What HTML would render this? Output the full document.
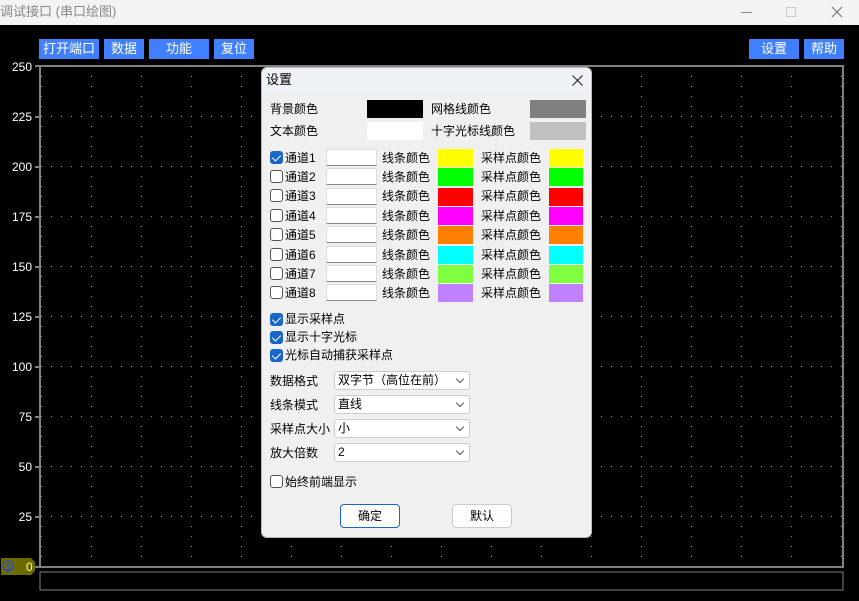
<!DOCTYPE html>
<html><head><meta charset="utf-8"><style>
*{margin:0;padding:0;box-sizing:border-box}
body{width:859px;height:601px;background:#000;position:relative;overflow:hidden;font-family:"Liberation Sans","Noto Sans CJK SC",sans-serif;font-size:12px}
.a{position:absolute}
.tb{left:0;top:0;width:859px;height:25px;background:#f3f3f3;color:#888;font-size:13px;line-height:24px}
.btn{background:#4080ff;color:#fff;font-size:13px;text-align:center;line-height:19px;height:20px;top:39px}
.yl{color:#fff;font-size:12px;width:32px;text-align:right;left:0;line-height:12px}
.dlg{left:261px;top:67px;width:331px;height:471px;background:#f0f0f0;border:1px solid #bbb;border-radius:6px;overflow:hidden;color:#000}
.dh{left:0;top:0;width:330px;height:25px;background:#eef2f7}
.t{font-size:12px;line-height:14px;white-space:nowrap}
.cb{width:13px;height:13px;border:1px solid #555;border-radius:3px;background:#fff}
.cbc{background:#1a66c8;border-color:#1a66c8}
.cbc:after{content:"";position:absolute;left:3px;top:1px;width:4px;height:7px;border:solid #fff;border-width:0 1.5px 1.5px 0;transform:rotate(45deg)}
.tx{width:51px;height:17px;background:#fff;border-bottom:1px solid #888;border-top:1px solid #ddd;border-left:1px solid #ddd;border-right:1px solid #ddd}
.sel{left:72px;width:136px;height:19px;background:#fff;border:1px solid #ccc;border-radius:3px;font-size:12px;line-height:17px;padding-left:3px}
.sel:after{content:"";position:absolute;right:6px;top:4px;width:5px;height:5px;border:solid #555;border-width:0 1px 1px 0;transform:rotate(45deg)}
.pb{height:24px;background:#fdfdfd;border:1px solid #ccc;border-radius:4px;text-align:center;line-height:22px;font-size:12px}
</style></head><body>
<div class="a tb"><span>调试接口 (串口绘图)</span>
<div class="a" style="left:741px;top:12px;width:11px;height:1px;background:#888"></div>
<div class="a" style="left:786px;top:7px;width:10px;height:10px;border:1px solid #ccc"></div>
<svg class="a" style="left:831px;top:6px" width="12" height="12"><path d="M1 1L11 11M11 1L1 11" stroke="#777" stroke-width="1.2"/></svg>
</div>
<div class="a btn" style="left:39px;width:60px">打开端口</div>
<div class="a btn" style="left:104px;width:40px">数据</div>
<div class="a btn" style="left:149px;width:60px">功能</div>
<div class="a btn" style="left:214px;width:40px">复位</div>
<div class="a btn" style="left:749px;width:50px">设置</div>
<div class="a btn" style="left:804px;width:40px">帮助</div>
<svg class="a" style="left:0;top:0" width="859" height="601">
<defs>
<pattern id="h" x="41" y="66" width="10" height="50" patternUnits="userSpaceOnUse"><rect x="0" y="0" width="1" height="1" fill="#888"/></pattern>
<pattern id="v" x="41" y="66" width="50" height="10" patternUnits="userSpaceOnUse"><rect x="0" y="0" width="1" height="1" fill="#888"/></pattern>
</defs>
<rect x="41" y="66" width="802" height="501" fill="url(#h)"/>
<rect x="41" y="66" width="802" height="501" fill="url(#v)"/>
<rect x="40" y="66" width="803" height="501" fill="none" stroke="#808080" stroke-width="2"/>
<g stroke="#808080" stroke-width="2">
<line x1="35" y1="66" x2="40" y2="66"/><line x1="35" y1="117" x2="40" y2="117"/><line x1="35" y1="167" x2="40" y2="167"/><line x1="35" y1="217" x2="40" y2="217"/><line x1="35" y1="267" x2="40" y2="267"/><line x1="35" y1="317" x2="40" y2="317"/><line x1="35" y1="367" x2="40" y2="367"/><line x1="35" y1="417" x2="40" y2="417"/><line x1="35" y1="467" x2="40" y2="467"/><line x1="35" y1="517" x2="40" y2="517"/><line x1="35" y1="567" x2="40" y2="567"/>
</g>
<rect x="40" y="572" width="803" height="18" fill="none" stroke="#808080" stroke-width="1"/>
<path d="M1 558 H31 L35 562 V571 L31 575 H1 Z" fill="#6b6b00"/>
<circle cx="8" cy="566" r="5" fill="none" stroke="#2244ff"/>
<text x="5.5" y="570" font-size="9" fill="#2244ff" font-family="Liberation Sans">1</text>
<text x="26" y="571" font-size="12" fill="#ffff80" font-family="Liberation Sans">0</text>
</svg>
<div class="a yl" style="top:61px">250</div>
<div class="a yl" style="top:111px">225</div>
<div class="a yl" style="top:161px">200</div>
<div class="a yl" style="top:211px">175</div>
<div class="a yl" style="top:261px">150</div>
<div class="a yl" style="top:311px">125</div>
<div class="a yl" style="top:361px">100</div>
<div class="a yl" style="top:411px">75</div>
<div class="a yl" style="top:461px">50</div>
<div class="a yl" style="top:511px">25</div>

<div class="a dlg">
<div class="a dh"></div>
<div class="a t" style="left:4px;top:5px;font-size:13px">设置</div>
<svg class="a" style="left:310px;top:7px" width="11" height="11"><path d="M0.5 0.5L10.5 10.5M10.5 0.5L0.5 10.5" stroke="#222" stroke-width="1.1"/></svg>
<div class="a t" style="left:8px;top:34px">背景颜色</div>
<div class="a" style="left:105px;top:32px;width:56px;height:18px;background:#000"></div>
<div class="a t" style="left:169px;top:34px">网格线颜色</div>
<div class="a" style="left:268px;top:32px;width:56px;height:18px;background:#808080"></div>
<div class="a t" style="left:8px;top:56px">文本颜色</div>
<div class="a" style="left:105px;top:54px;width:56px;height:18px;background:#fff"></div>
<div class="a t" style="left:169px;top:56px">十字光标线颜色</div>
<div class="a" style="left:268px;top:54px;width:56px;height:18px;background:#c0c0c0"></div>

<div class="a cb cbc" style="left:8px;top:83px"></div><div class="a t" style="left:23px;top:83px">通道1</div><div class="a tx" style="left:64px;top:81px"></div><div class="a t" style="left:120px;top:83px">线条颜色</div><div class="a" style="left:176px;top:81px;width:35px;height:18px;background:#ff0"></div><div class="a t" style="left:219px;top:83px">采样点颜色</div><div class="a" style="left:287px;top:81px;width:34px;height:18px;background:#ff0"></div>
<div class="a cb" style="left:8px;top:102px"></div><div class="a t" style="left:23px;top:102px">通道2</div><div class="a tx" style="left:64px;top:100px"></div><div class="a t" style="left:120px;top:102px">线条颜色</div><div class="a" style="left:176px;top:100px;width:35px;height:18px;background:#0f0"></div><div class="a t" style="left:219px;top:102px">采样点颜色</div><div class="a" style="left:287px;top:100px;width:34px;height:18px;background:#0f0"></div>
<div class="a cb" style="left:8px;top:121px"></div><div class="a t" style="left:23px;top:121px">通道3</div><div class="a tx" style="left:64px;top:120px"></div><div class="a t" style="left:120px;top:121px">线条颜色</div><div class="a" style="left:176px;top:120px;width:35px;height:18px;background:#f00"></div><div class="a t" style="left:219px;top:121px">采样点颜色</div><div class="a" style="left:287px;top:120px;width:34px;height:18px;background:#f00"></div>
<div class="a cb" style="left:8px;top:141px"></div><div class="a t" style="left:23px;top:141px">通道4</div><div class="a tx" style="left:64px;top:139px"></div><div class="a t" style="left:120px;top:141px">线条颜色</div><div class="a" style="left:176px;top:139px;width:35px;height:18px;background:#f0f"></div><div class="a t" style="left:219px;top:141px">采样点颜色</div><div class="a" style="left:287px;top:139px;width:34px;height:18px;background:#f0f"></div>
<div class="a cb" style="left:8px;top:160px"></div><div class="a t" style="left:23px;top:160px">通道5</div><div class="a tx" style="left:64px;top:158px"></div><div class="a t" style="left:120px;top:160px">线条颜色</div><div class="a" style="left:176px;top:158px;width:35px;height:18px;background:#ff8000"></div><div class="a t" style="left:219px;top:160px">采样点颜色</div><div class="a" style="left:287px;top:158px;width:34px;height:18px;background:#ff8000"></div>
<div class="a cb" style="left:8px;top:180px"></div><div class="a t" style="left:23px;top:180px">通道6</div><div class="a tx" style="left:64px;top:178px"></div><div class="a t" style="left:120px;top:180px">线条颜色</div><div class="a" style="left:176px;top:178px;width:35px;height:18px;background:#0ff"></div><div class="a t" style="left:219px;top:180px">采样点颜色</div><div class="a" style="left:287px;top:178px;width:34px;height:18px;background:#0ff"></div>
<div class="a cb" style="left:8px;top:199px"></div><div class="a t" style="left:23px;top:199px">通道7</div><div class="a tx" style="left:64px;top:197px"></div><div class="a t" style="left:120px;top:199px">线条颜色</div><div class="a" style="left:176px;top:197px;width:35px;height:18px;background:#80ff40"></div><div class="a t" style="left:219px;top:199px">采样点颜色</div><div class="a" style="left:287px;top:197px;width:34px;height:18px;background:#80ff40"></div>
<div class="a cb" style="left:8px;top:218px"></div><div class="a t" style="left:23px;top:218px">通道8</div><div class="a tx" style="left:64px;top:216px"></div><div class="a t" style="left:120px;top:218px">线条颜色</div><div class="a" style="left:176px;top:216px;width:35px;height:18px;background:#c080ff"></div><div class="a t" style="left:219px;top:218px">采样点颜色</div><div class="a" style="left:287px;top:216px;width:34px;height:18px;background:#c080ff"></div>

<div class="a cb cbc" style="left:8px;top:245px"></div><div class="a t" style="left:23px;top:244px">显示采样点</div>
<div class="a cb cbc" style="left:8px;top:263px"></div><div class="a t" style="left:23px;top:262px">显示十字光标</div>
<div class="a cb cbc" style="left:8px;top:281px"></div><div class="a t" style="left:23px;top:280px">光标自动捕获采样点</div>

<div class="a t" style="left:8px;top:306px">数据格式</div><div class="a sel" style="top:303px">双字节（高位在前）</div>
<div class="a t" style="left:8px;top:330px">线条模式</div><div class="a sel" style="top:327px">直线</div>
<div class="a t" style="left:8px;top:354px">采样点大小</div><div class="a sel" style="top:351px">小</div>
<div class="a t" style="left:8px;top:378px">放大倍数</div><div class="a sel" style="top:375px">2</div>

<div class="a cb" style="left:8px;top:407px"></div><div class="a t" style="left:23px;top:407px">始终前端显示</div>
<div class="a pb" style="left:78px;top:436px;width:60px;border-color:#1a66c8">确定</div>
<div class="a pb" style="left:190px;top:436px;width:60px">默认</div>
</div>
</body></html>
